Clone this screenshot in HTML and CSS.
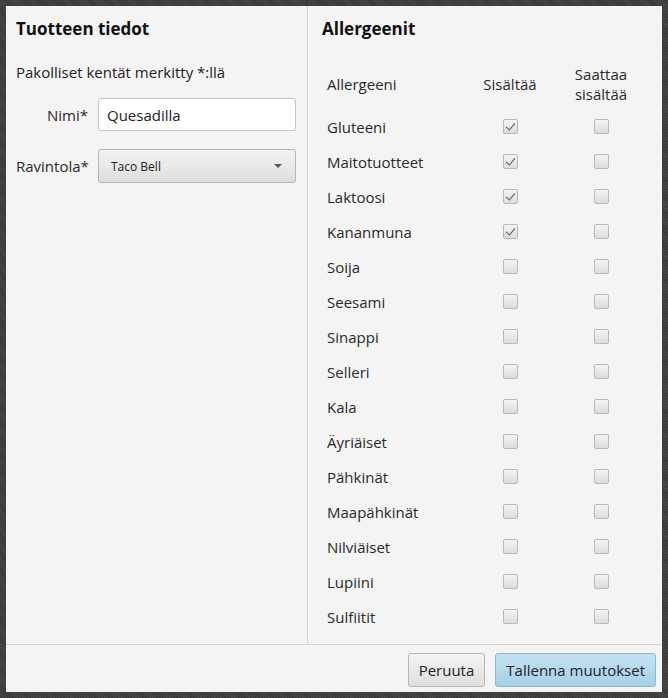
FILE: index.html
```html
<!DOCTYPE html>
<html lang="fi">
<head>
<meta charset="utf-8">
<title>Tuotteen tiedot</title>
<link rel="stylesheet" href="styles.css">
</head>
<body>
<div class="frame">
  <div class="window">
    <div class="main">
      <section class="left">
        <h2 class="title">Tuotteen tiedot</h2>
        <p class="note">Pakolliset kentät merkitty *:llä</p>
        <div class="form">
          <label class="lbl">Nimi*</label>
          <div class="field">Quesadilla</div>
          <label class="lbl">Ravintola*</label>
          <div class="combo"><span>Taco Bell</span><span class="arrow"></span></div>
        </div>
      </section>
      <section class="right">
        <h2 class="title">Allergeenit</h2>
        <div class="table">
          <div class="head">Allergeeni</div>
          <div class="head center">Sisältää</div>
          <div class="head center">Saattaa<br>sisältää</div>

          <div class="name">Gluteeni</div><div class="cell"><span class="cb on"></span></div><div class="cell"><span class="cb"></span></div>
          <div class="name">Maitotuotteet</div><div class="cell"><span class="cb on"></span></div><div class="cell"><span class="cb"></span></div>
          <div class="name">Laktoosi</div><div class="cell"><span class="cb on"></span></div><div class="cell"><span class="cb"></span></div>
          <div class="name">Kananmuna</div><div class="cell"><span class="cb on"></span></div><div class="cell"><span class="cb"></span></div>
          <div class="name">Soija</div><div class="cell"><span class="cb"></span></div><div class="cell"><span class="cb"></span></div>
          <div class="name">Seesami</div><div class="cell"><span class="cb"></span></div><div class="cell"><span class="cb"></span></div>
          <div class="name">Sinappi</div><div class="cell"><span class="cb"></span></div><div class="cell"><span class="cb"></span></div>
          <div class="name">Selleri</div><div class="cell"><span class="cb"></span></div><div class="cell"><span class="cb"></span></div>
          <div class="name">Kala</div><div class="cell"><span class="cb"></span></div><div class="cell"><span class="cb"></span></div>
          <div class="name">Äyriäiset</div><div class="cell"><span class="cb"></span></div><div class="cell"><span class="cb"></span></div>
          <div class="name">Pähkinät</div><div class="cell"><span class="cb"></span></div><div class="cell"><span class="cb"></span></div>
          <div class="name">Maapähkinät</div><div class="cell"><span class="cb"></span></div><div class="cell"><span class="cb"></span></div>
          <div class="name">Nilviäiset</div><div class="cell"><span class="cb"></span></div><div class="cell"><span class="cb"></span></div>
          <div class="name">Lupiini</div><div class="cell"><span class="cb"></span></div><div class="cell"><span class="cb"></span></div>
          <div class="name">Sulfiitit</div><div class="cell"><span class="cb"></span></div><div class="cell"><span class="cb"></span></div>
        </div>
      </section>
    </div>
    <footer class="bar">
      <button class="btn">Peruuta</button>
      <button class="btn primary">Tallenna muutokset</button>
    </footer>
  </div>
</div>
</body>
</html>
```

FILE: styles.css
```css
html, body {
  margin: 0;
  padding: 0;
  height: 100%;
}
body {
  background: #3f3f3f;
  font-family: "Open Sans", "Noto Sans", sans-serif;
  color: #2a2a2a;
}
.frame {
  padding: 6px;
  height: 698px;
  box-sizing: border-box;
  background-color: #3d3d3d;
  background-image: repeating-linear-gradient(45deg, #464646 0 1px, #393939 1px 2px);
}
.window {
  height: 100%;
  background: #f4f4f4;
  display: flex;
  flex-direction: column;
}
.main {
  flex: 1;
  display: flex;
  border-bottom: 1px solid #d2d2d2;
}
.left {
  width: 302px;
  border-right: 1px solid #d2d2d2;
  padding: 11px 0 0 10px;
  box-sizing: border-box;
  flex: none;
}
.right {
  flex: 1;
  padding: 11px 0 0 14px;
}
.title {
  margin: 0;
  font-size: 17px;
  font-weight: 700;
  color: #111;
  line-height: 24px;
}
.note {
  margin: 21px 0 0 0;
  font-size: 15px;
  line-height: 20px;
  color: #222;
}
.form {
  margin-top: 16px;
  display: grid;
  grid-template-columns: 72px 198px;
  column-gap: 10px;
  row-gap: 18px;
  align-items: center;
}
.lbl {
  font-size: 15px;
  color: #2a2a2a;
  text-align: right;
}
.field {
  height: 33px;
  box-sizing: border-box;
  border: 1px solid #c6c6c6;
  border-radius: 3px;
  background: #fff;
  font-size: 15px;
  padding: 0 8px;
  display: flex;
  align-items: center;
  color: #222;
}
.combo {
  height: 34px;
  box-sizing: border-box;
  border: 1px solid #b5b5b5;
  border-radius: 3px;
  background: linear-gradient(#f3f3f3, #dedede);
  font-size: 12px;
  padding: 0 12px;
  display: flex;
  align-items: center;
  justify-content: space-between;
  color: #222;
}
.arrow {
  width: 0;
  height: 0;
  border-left: 4px solid transparent;
  border-right: 4px solid transparent;
  border-top: 4px solid #555;
  margin-right: 1px;
}
.table {
  margin-top: 19px;
  margin-left: 5px;
  display: grid;
  grid-template-columns: 140px 86px 96px;
  grid-template-rows: 49px;
  grid-auto-rows: 35px;
  align-items: center;
  font-size: 15px;
  color: #2a2a2a;
}
.head {
  align-self: stretch;
  line-height: 20px;
  height: 40px;
  margin-top: 4px;
  display: flex;
  align-items: center;
}
.center {
  justify-content: center;
  text-align: center;
}
.cell {
  display: flex;
  justify-content: center;
}
.cb {
  width: 15px;
  height: 15px;
  box-sizing: border-box;
  border: 1px solid #b9b9b9;
  border-radius: 2px;
  background: linear-gradient(#f4f4f4, #dcdcdc);
  position: relative;
}
.cb.on::after {
  content: "";
  position: absolute;
  left: 4px;
  top: 1px;
  width: 4px;
  height: 8px;
  border-right: 1.6px solid #555;
  border-bottom: 1.6px solid #555;
  transform: rotate(40deg);
}
.bar {
  height: 47px;
  flex: none;
  display: flex;
  justify-content: flex-end;
  align-items: flex-start;
  gap: 10px;
  padding: 8px 6px 0 0;
  box-sizing: border-box;
}
.btn {
  height: 34px;
  font-family: inherit;
  font-size: 15px;
  color: #222;
  padding: 0 10px;
  border: 1px solid #b5b5b5;
  border-radius: 3px;
  background: linear-gradient(#f4f4f4, #dedede);
}
.btn.primary {
  border-color: #92b7cd;
  background: linear-gradient(#c5e2f3, #a6d0e8);
}
```
